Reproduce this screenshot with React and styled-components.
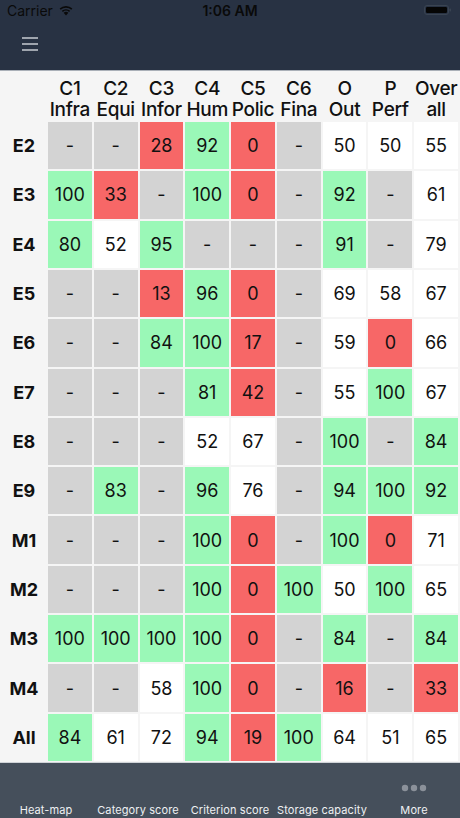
import styled, { createGlobalStyle } from "styled-components";

const GlobalStyle = createGlobalStyle`
  html, body {
    margin: 0;
    padding: 0;
    background: #f5f5f5;
  }
  #root {
    height: 100vh;
  }
  * {
    box-sizing: border-box;
  }
`

const columns = [
  ["C1", "Infra"],
  ["C2", "Equi"],
  ["C3", "Infor"],
  ["C4", "Hum"],
  ["C5", "Polic"],
  ["C6", "Fina"],
  ["O", "Out"],
  ["P", "Perf"],
  ["Over", "all"],
]

const rows = [
  ["E2", "-", "-", 28, 92, 0, "-", 50, 50, 55],
  ["E3", 100, 33, "-", 100, 0, "-", 92, "-", 61],
  ["E4", 80, 52, 95, "-", "-", "-", 91, "-", 79],
  ["E5", "-", "-", 13, 96, 0, "-", 69, 58, 67],
  ["E6", "-", "-", 84, 100, 17, "-", 59, 0, 66],
  ["E7", "-", "-", "-", 81, 42, "-", 55, 100, 67],
  ["E8", "-", "-", "-", 52, 67, "-", 100, "-", 84],
  ["E9", "-", 83, "-", 96, 76, "-", 94, 100, 92],
  ["M1", "-", "-", "-", 100, 0, "-", 100, 0, 71],
  ["M2", "-", "-", "-", 100, 0, 100, 50, 100, 65],
  ["M3", 100, 100, 100, 100, 0, "-", 84, "-", 84],
  ["M4", "-", "-", 58, 100, 0, "-", 16, "-", 33],
  ["All", 84, 61, 72, 94, 19, 100, 64, 51, 65],
]

const tabs = ["Heat-map", "Category score", "Criterion score", "Storage capacity", "More"]

// '-' grey, 80+ green, under 50 red, otherwise plain
function level(v){
  if (v === "-") return "none"
  if (v >= 80) return "good"
  if (v < 50) return "bad"
  return "mid"
}

export default function App(){
  return(
    <Screen>
      <GlobalStyle />
      <StatusBar>
        <Carrier>
          Carrier
          <svg width="16" height="12" viewBox="0 0 16 12">
            <path d="M8 11.5 L5.6 8.7 A3.6 3.6 0 0 1 10.4 8.7 Z" fill="#0a0a0a" />
            <path d="M3.8 6.8 A6.2 6.2 0 0 1 12.2 6.8 L11.1 8 A4.6 4.6 0 0 0 4.9 8 Z" fill="#0a0a0a" />
            <path d="M1.6 4.6 A9.3 9.3 0 0 1 14.4 4.6 L13.3 5.8 A7.7 7.7 0 0 0 2.7 5.8 Z" fill="#0a0a0a" />
          </svg>
        </Carrier>
        <Clock>1:06 AM</Clock>
        <Battery>
          <svg width="28" height="12" viewBox="0 0 28 12">
            <rect x="0.5" y="1.5" width="24" height="9" rx="2.5" fill="none" stroke="#3a4452" />
            <rect x="2" y="3" width="21" height="6" rx="1.2" fill="#050505" />
            <rect x="25.5" y="4.5" width="1.5" height="3" rx="0.7" fill="#3a4452" />
          </svg>
        </Battery>
      </StatusBar>
      <NavBar>
        <MenuButton>
          <svg width="16" height="14" viewBox="0 0 16 14">
            <path d="M0 1 H16 M0 7 H16 M0 13 H16" stroke="#c6cbd2" strokeWidth="1.6" />
          </svg>
        </MenuButton>
      </NavBar>
      <Table>
        <Corner />
        {columns.map(([a, b]) => (
          <HeadCell key={a}>{a}<br />{b}</HeadCell>
        ))}
        {rows.map(([label, ...values]) => [
          <RowLabel key={label}>{label}</RowLabel>,
          ...values.map((v, i) => (
            <Cell key={label + i} $level={level(v)}>{v}</Cell>
          )),
        ])}
      </Table>
      <TabBar>
        {tabs.map(t => (
          <Tab key={t}>
            <TabIcon>
              {t === "More" && (
                <svg width="26" height="8" viewBox="0 0 26 8">
                  <circle cx="4" cy="4" r="3.2" fill="#8b919a" />
                  <circle cx="13" cy="4" r="3.2" fill="#8b919a" />
                  <circle cx="22" cy="4" r="3.2" fill="#8b919a" />
                </svg>
              )}
            </TabIcon>
            <TabLabel>{t}</TabLabel>
          </Tab>
        ))}
      </TabBar>
    </Screen>
  )
}

const Screen = styled.div`
  display: flex;
  flex-direction: column;
  height: 100vh;
  font-family: Inter, "Liberation Sans", sans-serif;
  color: #111;
`

const StatusBar = styled.div`
  height: 20px;
  background: #283243;
  display: flex;
  align-items: center;
  justify-content: space-between;
  padding: 0 8px 0 7px;
  position: relative;
`

const Carrier = styled.div`
  display: flex;
  align-items: center;
  gap: 5px;
  font-size: 14px;
  color: #0a0a0a;
`

const Clock = styled.div`
  position: absolute;
  left: 0;
  right: 0;
  text-align: center;
  font-size: 14px;
  font-weight: 600;
  color: #0a0a0a;
`

const Battery = styled.div`
  display: flex;
  align-items: center;
`

const NavBar = styled.div`
  height: 51px;
  background: #283243;
  display: flex;
  align-items: center;
  padding: 0 22px;
  border-bottom: 1px solid #aab0b8;
`

const MenuButton = styled.div`
  display: flex;
  margin-top: -2px;
`

const Table = styled.div`
  flex: 1;
  display: grid;
  grid-template-columns: 46px repeat(9, 1fr);
  grid-template-rows: 49px repeat(13, 1fr);
  gap: 2px;
  padding: 0 2px 1px 0;
  background: #f5f5f5;
`

const Corner = styled.div``

const HeadCell = styled.div`
  display: flex;
  align-items: flex-end;
  justify-content: center;
  text-align: center;
  font-size: 19px;
  font-weight: 500;
  line-height: 21px;
  white-space: nowrap;
  letter-spacing: -0.3px;
`

const RowLabel = styled.div`
  display: flex;
  align-items: center;
  justify-content: center;
  padding-left: 2px;
  font-size: 18px;
  font-weight: 700;
`

const cellColors = {
  none: "#d3d3d3",
  good: "#9af8b7",
  bad: "#f76767",
  mid: "#ffffff",
}

const Cell = styled.div`
  display: flex;
  align-items: center;
  justify-content: center;
  font-size: 18px;
  background: ${p => cellColors[p.$level]};
`

const TabBar = styled.div`
  height: 56px;
  background: #454f5b;
  display: grid;
  grid-template-columns: repeat(5, 1fr);
  border-top: 1px solid #d0d4d8;
`

const Tab = styled.div`
  display: flex;
  flex-direction: column;
  align-items: center;
  justify-content: flex-end;
  padding-bottom: 1px;
`

const TabIcon = styled.div`
  height: 30px;
  display: flex;
  align-items: center;
  justify-content: center;
`

const TabLabel = styled.div`
  font-size: 11px;
  color: #eef0f2;
  white-space: nowrap;
  letter-spacing: 0.1px;
`
